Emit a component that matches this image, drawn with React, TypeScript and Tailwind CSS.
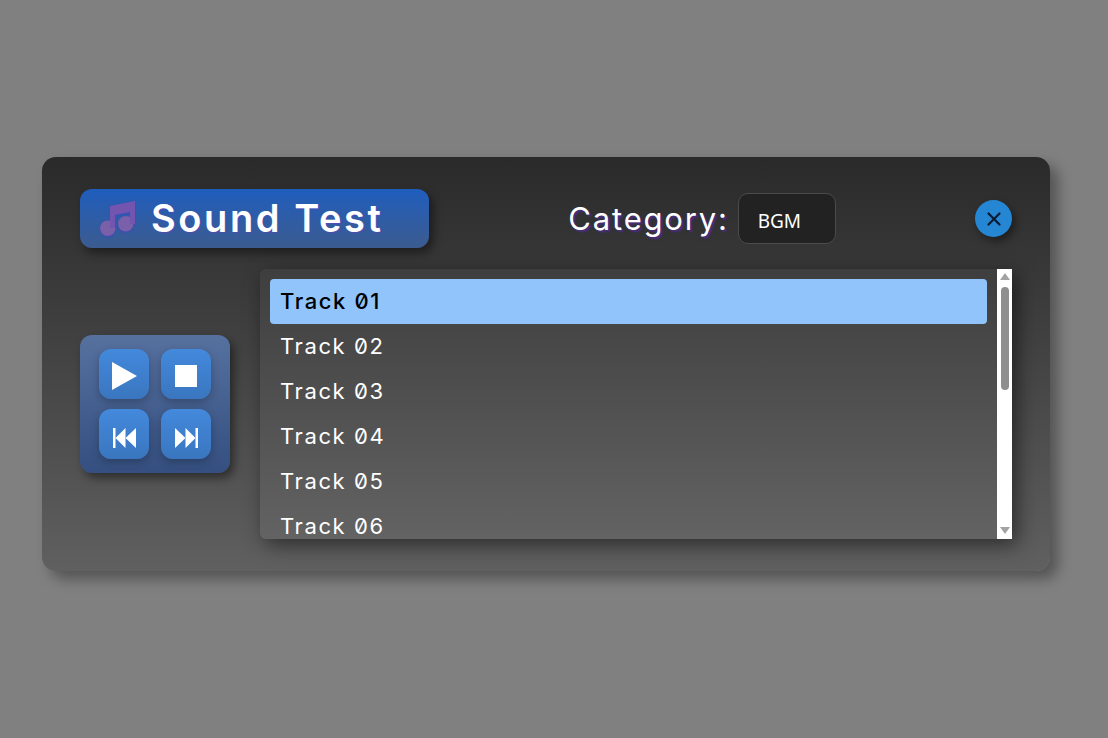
import { useState } from 'react';

const tracks = ['Track 01', 'Track 02', 'Track 03', 'Track 04', 'Track 05', 'Track 06'];

const display = "font-['Inter',sans-serif] slashed-zero";

function Play() {
  return (
    <svg width="25" height="28" viewBox="0 0 25 28" fill="white">
      <path d="M0 0 L25 14 L0 28 Z" />
    </svg>
  );
}

function Stop() {
  return <span className="block w-[22px] h-[22px] bg-white" />;
}

function Prev() {
  return (
    <svg width="23" height="20" viewBox="0 0 23 20" fill="white">
      <rect x="0" y="0" width="2.5" height="20" />
      <path d="M2.5 10 L12.5 0 V20 Z" />
      <path d="M12.5 10 L23 0 V20 Z" />
    </svg>
  );
}

function Next() {
  return (
    <svg width="23" height="20" viewBox="0 0 23 20" fill="white">
      <path d="M0 0 L10.5 10 L0 20 Z" />
      <path d="M10.5 0 L20.5 10 L10.5 20 Z" />
      <rect x="20.5" y="0" width="2.5" height="20" />
    </svg>
  );
}

function ControlButton({ children, down }: { children: React.ReactNode; down?: boolean }) {
  return (
    <button className={`w-[50px] h-[50px] rounded-xl flex justify-center bg-gradient-to-b from-[#4389dc] to-[#3a76bf] shadow-[0_3px_8px_rgba(0,0,0,0.25)] ${down ? 'items-end pb-[11px]' : 'items-center pt-[4px]'}`}>
      {children}
    </button>
  );
}

export default function App() {
  const [selected, setSelected] = useState(0);

  return (
    <div className="w-full min-h-screen bg-[#808080] flex items-center justify-center pr-[16px] pb-[10px]">
      <div className="w-[1008px] h-[414px] rounded-[14px] bg-gradient-to-b from-[#2a2a2a] to-[#606060] px-[38px] pt-[32px] pb-[32px] flex flex-col gap-[21px] shadow-[8px_8px_14px_rgba(0,0,0,0.35)]">
        <div className="flex items-center justify-between h-[59px]">
          <div className="w-[349px] h-[59px] rounded-xl bg-gradient-to-b from-[#1e5dbd] to-[#3b5b8f] flex items-center pl-[20px] gap-[16px] shadow-[4px_5px_10px_rgba(0,0,0,0.45)]">
            <svg width="35" height="35" viewBox="0 0 35 35" className="shrink-0 [filter:drop-shadow(0_1px_1px_rgba(70,60,210,0.6))]">
              <g fill="#7a5fa9">
                <circle cx="7.7" cy="27.3" r="7.7" />
                <circle cx="25.7" cy="22.7" r="7.7" />
              </g>
              <path d="M10 5 L35 0 V23 H30 V11 L15 14 V27 H10 Z" fill="#7355b0" />
            </svg>
            <span className={`${display} text-[38px] leading-none font-semibold text-white tracking-[2.6px] pb-[2px] [text-shadow:1px_1px_1px_rgba(120,60,200,0.5)]`}>Sound Test</span>
          </div>

          <div className="flex items-center gap-[9px]">
            <span className={`${display} text-[31px] leading-none font-normal text-white tracking-[1.8px] [text-shadow:2px_2px_2px_rgba(90,40,190,0.6)]`}>Category:</span>
            <div className="w-[98px] h-[51px] rounded-[10px] bg-[#222222] border border-[#4b4b4b] flex items-center pl-[19px] pt-[5px] font-['Noto_Sans',sans-serif] text-[19px] text-white">
              BGM
            </div>
          </div>

          <button className="w-[37px] h-[37px] rounded-full bg-[#2586d4] flex items-center justify-center shadow-[3px_4px_8px_rgba(0,0,0,0.45)]">
            <svg width="14" height="14" viewBox="0 0 14 14" stroke="#0b1b30" strokeWidth="2.2" strokeLinecap="round">
              <path d="M1.5 1.5 L12.5 12.5 M12.5 1.5 L1.5 12.5" />
            </svg>
          </button>
        </div>

        <div className="flex items-center gap-[30px] h-[270px]">
          <div className="w-[150px] h-[138px] shrink-0 rounded-xl bg-gradient-to-b from-[#57719f] to-[#344f80] grid grid-cols-[50px_50px] grid-rows-[50px_50px] gap-x-[12px] gap-y-[10px] content-center justify-center shadow-[4px_5px_10px_rgba(0,0,0,0.45)]">
            <ControlButton><Play /></ControlButton>
            <ControlButton><Stop /></ControlButton>
            <ControlButton down><Prev /></ControlButton>
            <ControlButton down><Next /></ControlButton>
          </div>

          <div className="flex-1 h-[270px] flex rounded-l-md bg-gradient-to-b from-[#3e3e3e] to-[#636363] shadow-[5px_6px_20px_rgba(0,0,0,0.5)]">
            <ul className="flex-1 pl-[10px] pr-[10px] pt-[10px] overflow-hidden">
              {tracks.map((t, i) => (
                <li
                  key={t}
                  onClick={() => setSelected(i)}
                  className={`${display} h-[45px] shrink-0 flex items-center pl-[10px] rounded text-[22px] tracking-[1.6px] ${i === selected ? 'bg-[#90c4fb] text-black font-medium' : 'text-white'}`}
                >
                  {t}
                </li>
              ))}
            </ul>
            <div className="w-[15px] shrink-0 bg-white flex flex-col items-center pt-[4px] pb-[5px]">
              <span className="block w-0 h-0 border-x-[5px] border-x-transparent border-b-[7px] border-b-[#a3a3a3]" />
              <span className="block w-[8px] h-[103px] mt-[7px] rounded-full bg-[#8f8f8f]" />
              <span className="block w-0 h-0 mt-auto border-x-[5px] border-x-transparent border-t-[7px] border-t-[#a3a3a3]" />
            </div>
          </div>
        </div>
      </div>
    </div>
  );
}
